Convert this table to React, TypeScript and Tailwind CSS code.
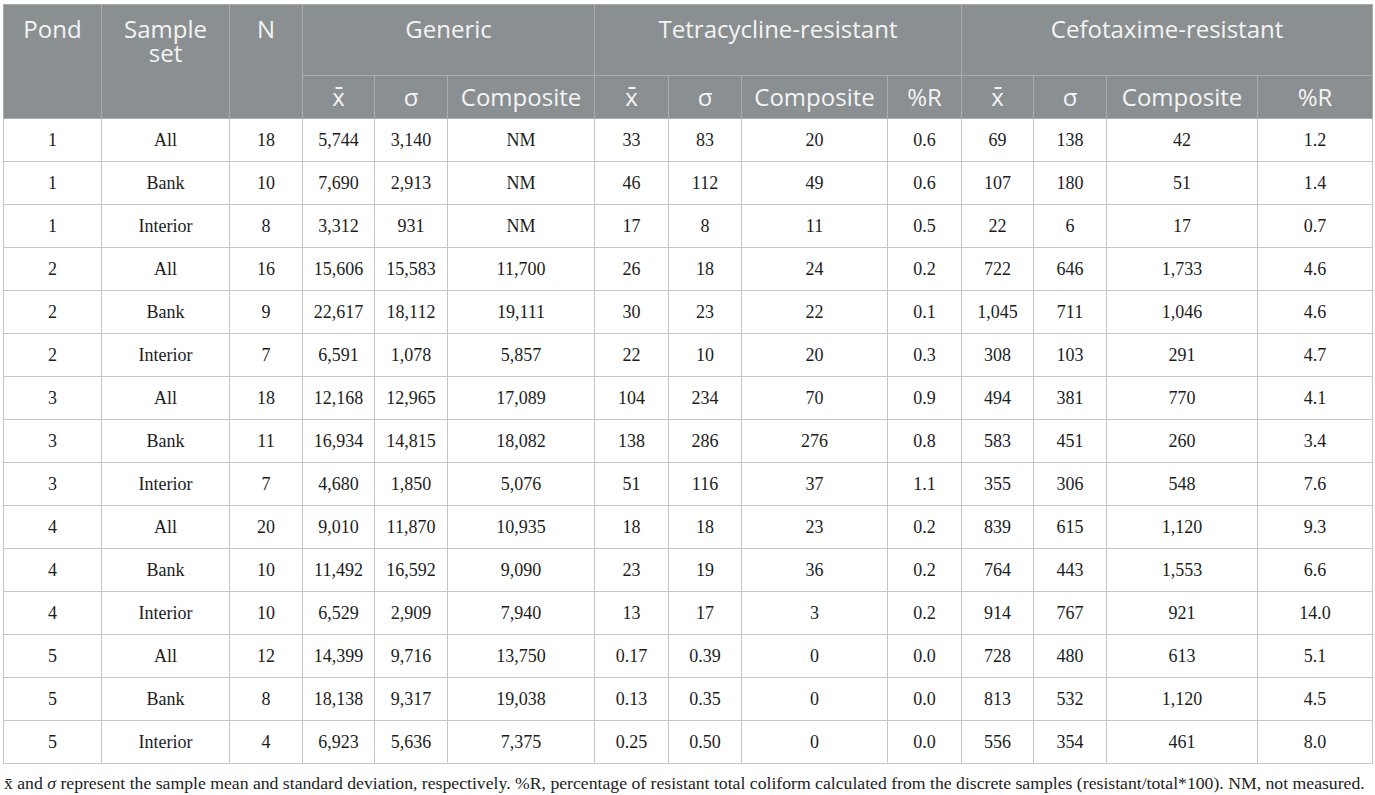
import React from 'react';

type Row = string[];

const rows: Row[] = [
  ['1', 'All', '18', '5,744', '3,140', 'NM', '33', '83', '20', '0.6', '69', '138', '42', '1.2'],
  ['1', 'Bank', '10', '7,690', '2,913', 'NM', '46', '112', '49', '0.6', '107', '180', '51', '1.4'],
  ['1', 'Interior', '8', '3,312', '931', 'NM', '17', '8', '11', '0.5', '22', '6', '17', '0.7'],
  ['2', 'All', '16', '15,606', '15,583', '11,700', '26', '18', '24', '0.2', '722', '646', '1,733', '4.6'],
  ['2', 'Bank', '9', '22,617', '18,112', '19,111', '30', '23', '22', '0.1', '1,045', '711', '1,046', '4.6'],
  ['2', 'Interior', '7', '6,591', '1,078', '5,857', '22', '10', '20', '0.3', '308', '103', '291', '4.7'],
  ['3', 'All', '18', '12,168', '12,965', '17,089', '104', '234', '70', '0.9', '494', '381', '770', '4.1'],
  ['3', 'Bank', '11', '16,934', '14,815', '18,082', '138', '286', '276', '0.8', '583', '451', '260', '3.4'],
  ['3', 'Interior', '7', '4,680', '1,850', '5,076', '51', '116', '37', '1.1', '355', '306', '548', '7.6'],
  ['4', 'All', '20', '9,010', '11,870', '10,935', '18', '18', '23', '0.2', '839', '615', '1,120', '9.3'],
  ['4', 'Bank', '10', '11,492', '16,592', '9,090', '23', '19', '36', '0.2', '764', '443', '1,553', '6.6'],
  ['4', 'Interior', '10', '6,529', '2,909', '7,940', '13', '17', '3', '0.2', '914', '767', '921', '14.0'],
  ['5', 'All', '12', '14,399', '9,716', '13,750', '0.17', '0.39', '0', '0.0', '728', '480', '613', '5.1'],
  ['5', 'Bank', '8', '18,138', '9,317', '19,038', '0.13', '0.35', '0', '0.0', '813', '532', '1,120', '4.5'],
  ['5', 'Interior', '4', '6,923', '5,636', '7,375', '0.25', '0.50', '0', '0.0', '556', '354', '461', '8.0'],
];

const widths = ['w-[98px]', 'w-[128px]', 'w-[73px]', 'w-[72px]', 'w-[73px]', 'w-[147px]', 'w-[74px]', 'w-[73px]', 'w-[146px]', 'w-[74px]', 'w-[72px]', 'w-[73px]', 'w-[151px]', 'w-[115px]'];

function XBar() {
  return (
    <span className="relative inline-block">
      x
      <span className="absolute left-1/2 top-[2px] h-[2px] w-[7px] -translate-x-1/2 bg-[#f2f2f2]" />
    </span>
  );
}

const th1 = 'border border-[#a9adaf] align-top pt-[12px] text-[24px] leading-[24px] font-normal';
const th2 = 'border border-[#a9adaf] h-[43px] p-0 align-middle text-[24px] leading-[24px] font-normal';
const td = 'border border-[#c6c6c6] h-[43px] text-center align-middle';

export default function App() {
  return (
    <div className="bg-white w-[1375px] h-[795px] pt-[4px] pl-[3px]">
      <table className="table-fixed border-collapse w-[1369px]">
        <colgroup>
          {widths.map((w, i) => (
            <col key={i} className={w} />
          ))}
        </colgroup>
        <thead className="bg-[#8a8f91] text-[#f4f4f4] font-['Open_Sans',sans-serif]">
          <tr className="h-[71px]">
            <th rowSpan={2} className={th1}>Pond</th>
            <th rowSpan={2} className={th1}>Sample<br />set</th>
            <th rowSpan={2} className={th1}>N</th>
            <th colSpan={3} className={th1}>Generic</th>
            <th colSpan={4} className={th1}>Tetracycline-resistant</th>
            <th colSpan={4} className={th1}>Cefotaxime-resistant</th>
          </tr>
          <tr>
            <th className={th2}><XBar /></th>
            <th className={th2}>σ</th>
            <th className={th2}>Composite</th>
            <th className={th2}><XBar /></th>
            <th className={th2}>σ</th>
            <th className={th2}>Composite</th>
            <th className={th2}>%R</th>
            <th className={th2}><XBar /></th>
            <th className={th2}>σ</th>
            <th className={th2}>Composite</th>
            <th className={th2}>%R</th>
          </tr>
        </thead>
        <tbody className="font-['Liberation_Serif',serif] text-[18px] text-[#1c1c1c]">
          {rows.map((r, i) => (
            <tr key={i}>
              {r.map((c, j) => (
                <td key={j} className={td}>{c}</td>
              ))}
            </tr>
          ))}
        </tbody>
      </table>
      <p className="mt-[9px] pl-[1px] whitespace-nowrap font-['Liberation_Serif',serif] text-[17.7px] leading-[20px] text-[#222]">
        x̄ and <i>σ</i> represent the sample mean and standard deviation, respectively. %R, percentage of resistant total coliform calculated from the discrete samples (resistant/total*100). NM, not measured.
      </p>
    </div>
  );
}
